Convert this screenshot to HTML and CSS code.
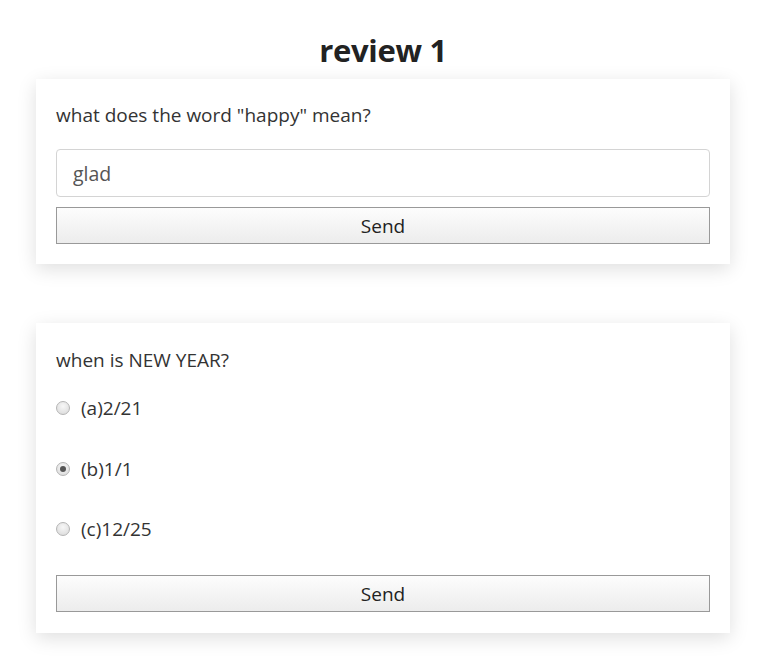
FILE: index.html
```html
<!DOCTYPE html>
<html lang="en">
<head>
<meta charset="utf-8">
<title>review 1</title>
<link rel="stylesheet" href="styles.css">
</head>
<body>
<main class="page">
  <h1 class="title">review 1</h1>
  <section class="card">
    <p class="question">what does the word "happy" mean?</p>
    <input class="answer" type="text" value="glad">
    <button class="send" type="button">Send</button>
  </section>
  <section class="card card-choice">
    <p class="question">when is NEW YEAR?</p>
    <div class="options">
      <label class="option"><span class="radio"></span><span>(a)2/21</span></label>
      <label class="option"><span class="radio checked"></span><span>(b)1/1</span></label>
      <label class="option"><span class="radio"></span><span>(c)12/25</span></label>
    </div>
    <button class="send send-choice" type="button">Send</button>
  </section>
</main>
</body>
</html>
```
FILE: styles.css
```css
* { box-sizing: border-box; }
html, body { margin: 0; padding: 0; background: #fff; }
body {
  font-family: "Open Sans", "Noto Sans", sans-serif;
  color: #333;
}
.page {
  padding: 29px 36px 31px;
  display: flex;
  flex-direction: column;
}
.title {
  margin: 0 0 7px;
  text-align: center;
  font-size: 31px;
  line-height: 43px;
  font-weight: 700;
  color: #222;
  letter-spacing: -0.3px;
}
.card {
  background: #fff;
  box-shadow: 0 5px 18px rgba(0, 0, 0, 0.13);
  padding: 24px 20px 20px;
  display: flex;
  flex-direction: column;
}
.card-choice {
  margin-top: 59px;
  padding-bottom: 21px;
}
.question {
  margin: 0;
  font-size: 19px;
  line-height: 24px;
  color: #333;
}
.card-choice .question { padding-top: 1px; }
.answer {
  margin-top: 22px;
  height: 48px;
  border: 1px solid #d4d4d4;
  border-radius: 4px;
  padding: 0 16px;
  font-family: inherit;
  font-size: 19.5px;
  color: #555;
  outline: none;
}
.send {
  margin-top: 10px;
  height: 37px;
  border: 1px solid #999;
  border-radius: 0;
  background: linear-gradient(#fdfdfd, #ececec);
  font-family: inherit;
  font-size: 19px;
  color: #222;
  padding: 0;
}
.send-choice { margin-top: 34px; }
.options {
  display: flex;
  flex-direction: column;
  gap: 36.5px;
  margin-top: 24px;
}
.option {
  display: flex;
  align-items: center;
  gap: 11px;
  height: 24px;
  font-size: 19px;
  color: #333;
}
.radio {
  width: 14px;
  height: 14px;
  border-radius: 50%;
  border: 1px solid #b5b5b5;
  background: radial-gradient(circle at 50% 35%, #f7f7f7, #d8d8d8);
  display: flex;
  align-items: center;
  justify-content: center;
}
.radio.checked::after {
  content: "";
  width: 6px;
  height: 6px;
  border-radius: 50%;
  background: #555;
}
```
